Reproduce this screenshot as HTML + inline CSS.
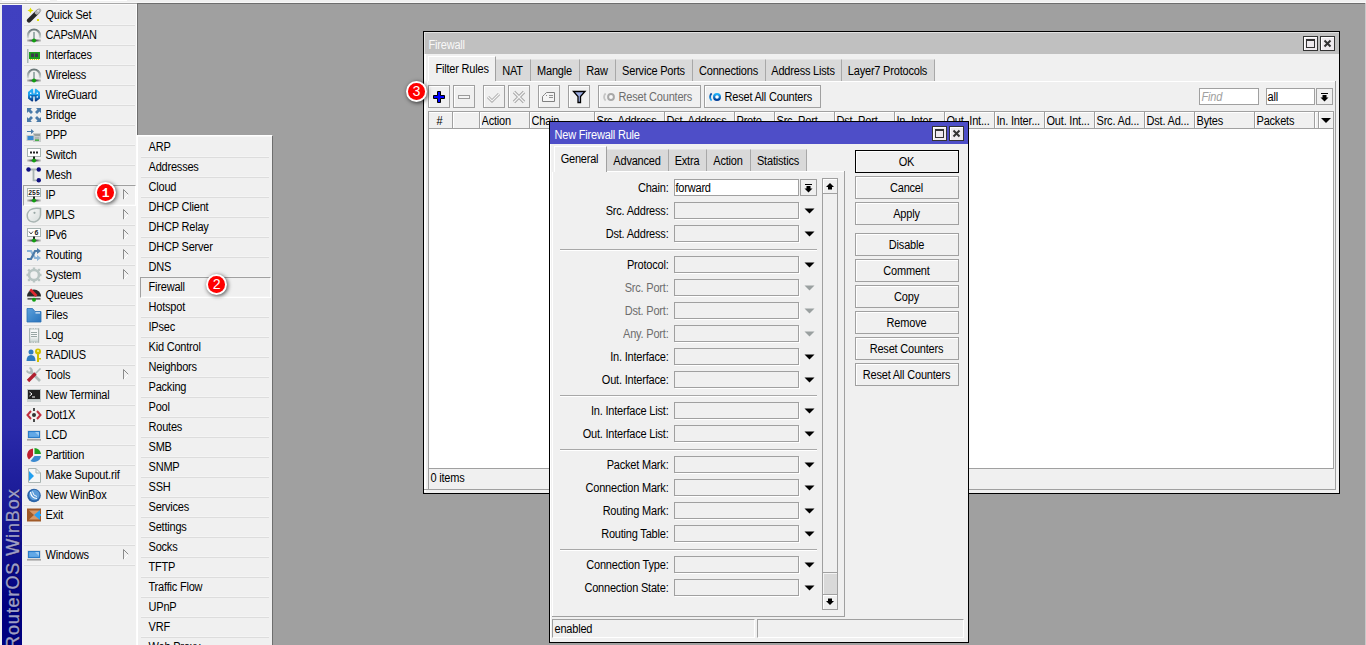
<!DOCTYPE html>
<html><head><meta charset="utf-8"><style>
html,body{margin:0;padding:0;}
body{width:1366px;height:645px;overflow:hidden;position:relative;background:#f0f0f0;font-family:"Liberation Sans",sans-serif;}
body>div{position:absolute;}
.t{position:absolute;font-size:11px;line-height:13px;height:13px;color:#000;white-space:nowrap;letter-spacing:-0.2px;transform:scaleY(1.11);transform-origin:0 10px;}
</style></head><body>
<div style="left:0px;top:0px;width:1366px;height:3px;background:#f0f0f0"></div>
<div style="left:2px;top:0px;width:23px;height:1px;background:#fff"></div>
<div style="left:27px;top:0px;width:23px;height:1px;background:#fff"></div>
<div style="left:57px;top:0px;width:70px;height:1px;background:#fff"></div>
<div style="left:0px;top:2px;width:1366px;height:1px;background:#f8f8f8"></div>
<div style="left:0px;top:3px;width:137px;height:1px;background:#a8a8a8"></div>
<div style="left:137px;top:3px;width:1228px;height:642px;background:#a0a0a0;border-top:1px solid #6e6e6e;border-left:1px solid #6e6e6e;box-sizing:border-box"></div>
<div style="left:1365px;top:3px;width:1px;height:642px;background:#c8c8c8"></div>
<div style="left:0px;top:4px;width:137px;height:641px;background:#f0f0f0"></div>
<div style="left:0px;top:4px;width:136px;height:1px;background:#fafafa"></div>
<div style="left:136px;top:4px;width:1px;height:641px;background:#fdfdfd"></div>
<div style="left:2px;top:5px;width:20px;height:640px;background:linear-gradient(to bottom,#4040c0 0%,#3c3cbc 35%,#2a2aaa 66%,#14148f 82%,#000080 94%,#000080 100%)"></div>
<div style="left:-72px;top:554px;width:170px;height:20px;transform:rotate(-90deg);transform-origin:85px 10px;font:18px/20px 'Liberation Sans',sans-serif;letter-spacing:0.9px;color:#9e9ec6;-webkit-text-stroke:0.35px #9e9ec6;text-shadow:0 1px 1px rgba(0,0,40,0.8);white-space:nowrap;text-align:left">RouterOS WinBox</div>
<div class="t" style="left:45.5px;top:9px;">Quick Set</div>
<svg style="position:absolute;left:26px;top:7px;" width="16" height="16" viewBox="0 0 16 16"><path d="M3 13.5 L12 4.5" stroke="#262626" stroke-width="4.2" stroke-linecap="round"/><path d="M10.8 5.7 L13.2 3.3" stroke="#b4b4b4" stroke-width="4" stroke-linecap="round"/><rect x="11.3" y="3" width="1.6" height="1.6" fill="#e8e8e8"/>
<path d="M4.5 0.5 L5.4 2.6 L7.5 3.5 L5.4 4.4 L4.5 6.5 L3.6 4.4 L1.5 3.5 L3.6 2.6Z" fill="#e0e000"/><rect x="11" y="12" width="2" height="2" fill="#e0e000"/></svg>
<div style="left:24px;top:24px;width:111px;height:1px;background:#f4f4f4"></div>
<div style="left:24px;top:25px;width:111px;height:1px;background:#dcdcdc"></div>
<div class="t" style="left:45.5px;top:29px;">CAPsMAN</div>
<svg style="position:absolute;left:26px;top:27px;" width="16" height="16" viewBox="0 0 16 16"><defs><linearGradient id="ag1" x1="0" y1="0" x2="0" y2="1"><stop offset="0" stop-color="#6a7878"/><stop offset="1" stop-color="#dde2e2"/></linearGradient><linearGradient id="bg1" x1="0" y1="0" x2="1" y2="0"><stop offset="0" stop-color="#222" stop-opacity="0.2"/><stop offset="0.5" stop-color="#111"/><stop offset="1" stop-color="#222" stop-opacity="0.2"/></linearGradient></defs>
<path d="M2 11.5 V8.5 A6 6 0 0 1 14 8.5 V11.5" fill="none" stroke="url(#ag1)" stroke-width="2.2"/>
<rect x="7" y="5" width="2" height="8" fill="#9fb0ae"/>
<rect x="1" y="12.5" width="14" height="2" fill="url(#bg1)"/>
<circle cx="8" cy="13.5" r="2" fill="#10a010"/></svg>
<div style="left:24px;top:44px;width:111px;height:1px;background:#f4f4f4"></div>
<div style="left:24px;top:45px;width:111px;height:1px;background:#dcdcdc"></div>
<div class="t" style="left:45.5px;top:49px;">Interfaces</div>
<svg style="position:absolute;left:26px;top:47px;" width="16" height="16" viewBox="0 0 16 16"><rect x="1" y="2" width="1.5" height="14" fill="#a9b8b6"/><rect x="3" y="5" width="11" height="7" fill="#1e9c1e"/><rect x="5" y="6.5" width="3" height="3.5" fill="#3a3a4a"/><rect x="9" y="6.5" width="3" height="3.5" fill="#3a3a4a"/><path d="M4 12.5 H13" stroke="#d8d800" stroke-width="1" stroke-dasharray="1 1"/></svg>
<div style="left:24px;top:64px;width:111px;height:1px;background:#f4f4f4"></div>
<div style="left:24px;top:65px;width:111px;height:1px;background:#dcdcdc"></div>
<div class="t" style="left:45.5px;top:69px;">Wireless</div>
<svg style="position:absolute;left:26px;top:67px;" width="16" height="16" viewBox="0 0 16 16"><defs><linearGradient id="ag2" x1="0" y1="0" x2="0" y2="1"><stop offset="0" stop-color="#6a7878"/><stop offset="1" stop-color="#dde2e2"/></linearGradient><linearGradient id="bg2" x1="0" y1="0" x2="1" y2="0"><stop offset="0" stop-color="#222" stop-opacity="0.2"/><stop offset="0.5" stop-color="#111"/><stop offset="1" stop-color="#222" stop-opacity="0.2"/></linearGradient></defs>
<path d="M2 11.5 V8.5 A6 6 0 0 1 14 8.5 V11.5" fill="none" stroke="url(#ag2)" stroke-width="2.2"/>
<rect x="7" y="5" width="2" height="8" fill="#9fb0ae"/>
<rect x="1" y="12.5" width="14" height="2" fill="url(#bg2)"/>
<circle cx="8" cy="13.5" r="2" fill="#10a010"/></svg>
<div style="left:24px;top:84px;width:111px;height:1px;background:#f4f4f4"></div>
<div style="left:24px;top:85px;width:111px;height:1px;background:#dcdcdc"></div>
<div class="t" style="left:45.5px;top:89px;">WireGuard</div>
<svg style="position:absolute;left:26px;top:87px;" width="16" height="16" viewBox="0 0 16 16"><defs><linearGradient id="wg" x1="0" y1="0" x2="0" y2="1"><stop offset="0" stop-color="#28b4f8"/><stop offset="0.45" stop-color="#1ea0ec"/><stop offset="1" stop-color="#002878"/></linearGradient></defs><path d="M6.2 1.5 L2 5 V11.5 L6.2 14.8 L7.2 13.8 V11.8 L8 11 V5.2 L7.2 4.4 V2.5Z M9.8 1.5 L14 5 V11.5 L9.8 14.8 L8.8 13.8 V11.8 L8 11 V5.2 L8.8 4.4 V2.5Z" fill="url(#wg)"/><rect x="5" y="6.8" width="6" height="2.4" fill="url(#wg)"/><g fill="#f4f8ff"><rect x="4" y="5.6" width="1.4" height="1.4"/><rect x="10.6" y="5.6" width="1.4" height="1.4"/><rect x="4" y="9.2" width="1.4" height="1.4"/><rect x="10.6" y="9.2" width="1.4" height="1.4"/></g><rect x="7.3" y="4.5" width="1.4" height="2" fill="#f0f0f0"/><rect x="7.3" y="9.5" width="1.4" height="2.2" fill="#f0f0f0"/></svg>
<div style="left:24px;top:104px;width:111px;height:1px;background:#f4f4f4"></div>
<div style="left:24px;top:105px;width:111px;height:1px;background:#dcdcdc"></div>
<div class="t" style="left:45.5px;top:109px;">Bridge</div>
<svg style="position:absolute;left:26px;top:107px;" width="16" height="16" viewBox="0 0 16 16"><path transform="translate(1 1) scale(1 1)" d="M0 0 H5 L3.5 1.5 L6 4 L4 6 L1.5 3.5 L0 5Z" fill="#4a7aa8"/><path transform="translate(15 1) scale(-1 1)" d="M0 0 H5 L3.5 1.5 L6 4 L4 6 L1.5 3.5 L0 5Z" fill="#4a7aa8"/><path transform="translate(1 15) scale(1 -1)" d="M0 0 H5 L3.5 1.5 L6 4 L4 6 L1.5 3.5 L0 5Z" fill="#4a7aa8"/><path transform="translate(15 15) scale(-1 -1)" d="M0 0 H5 L3.5 1.5 L6 4 L4 6 L1.5 3.5 L0 5Z" fill="#4a7aa8"/></svg>
<div style="left:24px;top:124px;width:111px;height:1px;background:#f4f4f4"></div>
<div style="left:24px;top:125px;width:111px;height:1px;background:#dcdcdc"></div>
<div class="t" style="left:45.5px;top:129px;">PPP</div>
<svg style="position:absolute;left:26px;top:127px;" width="16" height="16" viewBox="0 0 16 16"><path d="M1 4 H5 V2 L8 4.5 L5 7 V5 H1Z" fill="#4a7aa8"/><rect x="7" y="6" width="8" height="9" fill="#c8cccc"/><rect x="8" y="7" width="6" height="2" fill="#9aa0a0"/><rect x="9" y="10.5" width="4" height="1" fill="#9aa0a0"/><rect x="9" y="12.5" width="4" height="1.2" fill="#18a018"/><rect x="1" y="8.5" width="7" height="5" fill="#3a8ad0" stroke="#c8cccc" stroke-width="1"/></svg>
<div style="left:24px;top:144px;width:111px;height:1px;background:#f4f4f4"></div>
<div style="left:24px;top:145px;width:111px;height:1px;background:#dcdcdc"></div>
<div class="t" style="left:45.5px;top:149px;">Switch</div>
<svg style="position:absolute;left:26px;top:147px;" width="16" height="16" viewBox="0 0 16 16"><defs><linearGradient id="sb0" x1="0" y1="0" x2="1" y2="0"><stop offset="0" stop-color="#222" stop-opacity="0.15"/><stop offset="0.5" stop-color="#111"/><stop offset="1" stop-color="#222" stop-opacity="0.15"/></linearGradient></defs><rect x="1.5" y="1.5" width="13" height="8" fill="#fff" stroke="#a8b4b2" stroke-width="1"/><rect x="4" y="4.5" width="2" height="2" fill="#222"/><rect x="7" y="4.5" width="2" height="2" fill="#222"/><rect x="10" y="4.5" width="2" height="2" fill="#222"/>
<rect x="7" y="9.5" width="2" height="3" fill="#222"/><rect x="1" y="12.5" width="14" height="2" fill="url(#sb0)"/><circle cx="8" cy="13.5" r="2" fill="#10a010"/></svg>
<div style="left:24px;top:164px;width:111px;height:1px;background:#f4f4f4"></div>
<div style="left:24px;top:165px;width:111px;height:1px;background:#dcdcdc"></div>
<div class="t" style="left:45.5px;top:169px;">Mesh</div>
<svg style="position:absolute;left:26px;top:167px;" width="16" height="16" viewBox="0 0 16 16"><path d="M2.5 2.5 H12.8 M7.5 2.5 V13.3 H12.8" fill="none" stroke="#a8b4b2" stroke-width="1.8"/><circle cx="2.5" cy="2.5" r="2.2" fill="#101080"/><circle cx="12.8" cy="2.5" r="2.2" fill="#101080"/><circle cx="12.8" cy="13.3" r="2.2" fill="#101080"/></svg>
<div style="left:24px;top:184px;width:111px;height:1px;background:#f4f4f4"></div>
<div style="left:24px;top:185px;width:111px;height:1px;background:#dcdcdc"></div>
<div class="t" style="left:45.5px;top:189px;">IP</div>
<svg style="position:absolute;left:26px;top:187px;" width="16" height="16" viewBox="0 0 16 16"><defs><linearGradient id="sb1" x1="0" y1="0" x2="1" y2="0"><stop offset="0" stop-color="#222" stop-opacity="0.15"/><stop offset="0.5" stop-color="#111"/><stop offset="1" stop-color="#222" stop-opacity="0.15"/></linearGradient></defs><rect x="1.5" y="1.5" width="13" height="8" fill="#fff" stroke="#a8b4b2" stroke-width="1"/><text x="8" y="8" font-family="Liberation Mono" font-size="6.5" font-weight="bold" text-anchor="middle" fill="#222">255</text>
<rect x="7" y="9.5" width="2" height="3" fill="#222"/><rect x="1" y="12.5" width="14" height="2" fill="url(#sb1)"/><circle cx="8" cy="13.5" r="2" fill="#10a010"/></svg>
<div style="left:24px;top:204px;width:111px;height:1px;background:#f4f4f4"></div>
<div style="left:24px;top:205px;width:111px;height:1px;background:#dcdcdc"></div>
<svg style="position:absolute;left:122px;top:189px;" width="8" height="12" viewBox="0 0 8 12"><path d="M1.5 0.5 L1.5 10.5" stroke="#8a8a8a" stroke-width="1"/><path d="M1.5 0.5 L6.5 5.5" stroke="#8a8a8a" stroke-width="1"/><path d="M1.5 10.5 L6.5 5.5" stroke="#ffffff" stroke-width="1"/></svg>
<div class="t" style="left:45.5px;top:209px;">MPLS</div>
<svg style="position:absolute;left:26px;top:207px;" width="16" height="16" viewBox="0 0 16 16"><defs><linearGradient id="mg" x1="0" y1="0" x2="1" y2="1"><stop offset="0" stop-color="#f8f8f8"/><stop offset="1" stop-color="#d8dedd"/></linearGradient></defs><path d="M4 3 Q7 1 11 1.2 L14.5 1.5 L14.5 8 Q14 13 9 14.8 Q4 15.5 2 12 Q0.8 9 1.5 6.5 Q2.3 4.2 4 3Z" fill="url(#mg)" stroke="#a8b4b2" stroke-width="1.5"/><circle cx="8.5" cy="5.8" r="1.1" fill="#9aa8a6"/></svg>
<div style="left:24px;top:224px;width:111px;height:1px;background:#f4f4f4"></div>
<div style="left:24px;top:225px;width:111px;height:1px;background:#dcdcdc"></div>
<svg style="position:absolute;left:122px;top:209px;" width="8" height="12" viewBox="0 0 8 12"><path d="M1.5 0.5 L1.5 10.5" stroke="#8a8a8a" stroke-width="1"/><path d="M1.5 0.5 L6.5 5.5" stroke="#8a8a8a" stroke-width="1"/><path d="M1.5 10.5 L6.5 5.5" stroke="#ffffff" stroke-width="1"/></svg>
<div class="t" style="left:45.5px;top:229px;">IPv6</div>
<svg style="position:absolute;left:26px;top:227px;" width="16" height="16" viewBox="0 0 16 16"><defs><linearGradient id="sb2" x1="0" y1="0" x2="1" y2="0"><stop offset="0" stop-color="#222" stop-opacity="0.15"/><stop offset="0.5" stop-color="#111"/><stop offset="1" stop-color="#222" stop-opacity="0.15"/></linearGradient></defs><rect x="1.5" y="1.5" width="13" height="8" fill="#fff" stroke="#a8b4b2" stroke-width="1"/><path d="M3 4.5 L5 7 L7 4.5" fill="none" stroke="#222" stroke-width="0.8"/><text x="10.5" y="8" font-family="Liberation Sans" font-size="7" font-weight="bold" text-anchor="middle" fill="#222">6</text>
<rect x="7" y="9.5" width="2" height="3" fill="#222"/><rect x="1" y="12.5" width="14" height="2" fill="url(#sb2)"/><circle cx="8" cy="13.5" r="2" fill="#10a010"/></svg>
<div style="left:24px;top:244px;width:111px;height:1px;background:#f4f4f4"></div>
<div style="left:24px;top:245px;width:111px;height:1px;background:#dcdcdc"></div>
<svg style="position:absolute;left:122px;top:229px;" width="8" height="12" viewBox="0 0 8 12"><path d="M1.5 0.5 L1.5 10.5" stroke="#8a8a8a" stroke-width="1"/><path d="M1.5 0.5 L6.5 5.5" stroke="#8a8a8a" stroke-width="1"/><path d="M1.5 10.5 L6.5 5.5" stroke="#ffffff" stroke-width="1"/></svg>
<div class="t" style="left:45.5px;top:249px;">Routing</div>
<svg style="position:absolute;left:26px;top:247px;" width="16" height="16" viewBox="0 0 16 16"><path d="M1 4 H5 L9 11 H12" fill="none" stroke="#8ab4d8" stroke-width="2.2"/><path d="M1 12 H5 L9 4 H12" fill="none" stroke="#4a7aa8" stroke-width="2.2"/><path d="M11 1 L15 4 L11 7Z" fill="#4a7aa8"/><path d="M11 8 L15 11 L11 14Z" fill="#8ab4d8"/></svg>
<div style="left:24px;top:264px;width:111px;height:1px;background:#f4f4f4"></div>
<div style="left:24px;top:265px;width:111px;height:1px;background:#dcdcdc"></div>
<svg style="position:absolute;left:122px;top:249px;" width="8" height="12" viewBox="0 0 8 12"><path d="M1.5 0.5 L1.5 10.5" stroke="#8a8a8a" stroke-width="1"/><path d="M1.5 0.5 L6.5 5.5" stroke="#8a8a8a" stroke-width="1"/><path d="M1.5 10.5 L6.5 5.5" stroke="#ffffff" stroke-width="1"/></svg>
<div class="t" style="left:45.5px;top:269px;">System</div>
<svg style="position:absolute;left:26px;top:267px;" width="16" height="16" viewBox="0 0 16 16"><circle cx="8" cy="8" r="5" fill="none" stroke="#b8c4c2" stroke-width="2.6"/><g fill="#b8c4c2"><rect x="6.8" y="0.5" width="2.4" height="3"/><rect x="6.8" y="12.5" width="2.4" height="3"/><rect x="0.5" y="6.8" width="3" height="2.4"/><rect x="12.5" y="6.8" width="3" height="2.4"/><rect x="1.8" y="2.2" width="2.4" height="2.4" transform="rotate(45 3 3.4)"/><rect x="11.8" y="11.8" width="2.4" height="2.4"/><rect x="11.8" y="1.8" width="2.4" height="2.4"/><rect x="1.8" y="11.8" width="2.4" height="2.4"/></g></svg>
<div style="left:24px;top:284px;width:111px;height:1px;background:#f4f4f4"></div>
<div style="left:24px;top:285px;width:111px;height:1px;background:#dcdcdc"></div>
<svg style="position:absolute;left:122px;top:269px;" width="8" height="12" viewBox="0 0 8 12"><path d="M1.5 0.5 L1.5 10.5" stroke="#8a8a8a" stroke-width="1"/><path d="M1.5 0.5 L6.5 5.5" stroke="#8a8a8a" stroke-width="1"/><path d="M1.5 10.5 L6.5 5.5" stroke="#ffffff" stroke-width="1"/></svg>
<div class="t" style="left:45.5px;top:289px;">Queues</div>
<svg style="position:absolute;left:26px;top:287px;" width="16" height="16" viewBox="0 0 16 16"><path d="M1 9.5 A7 7 0 0 1 15 9.5 Z" fill="#2a2a2a"/><path d="M4.2 2.5 L10.5 9" stroke="#e02830" stroke-width="2.6"/><path d="M1.5 11.8 H14.5" stroke="#222" stroke-width="1.8" opacity="0.7"/><circle cx="8" cy="12.8" r="2" fill="#10a010"/></svg>
<div style="left:24px;top:304px;width:111px;height:1px;background:#f4f4f4"></div>
<div style="left:24px;top:305px;width:111px;height:1px;background:#dcdcdc"></div>
<div class="t" style="left:45.5px;top:309px;">Files</div>
<svg style="position:absolute;left:26px;top:307px;" width="16" height="16" viewBox="0 0 16 16"><defs><linearGradient id="fg" x1="0" y1="0" x2="1" y2="1"><stop offset="0" stop-color="#5aa0dc"/><stop offset="1" stop-color="#2a74bc"/></linearGradient></defs><path d="M1 1.5 H6.5 L9 4.5 H15 V15 H1Z" fill="url(#fg)" stroke="#2a6fb4" stroke-width="0.8"/><rect x="9.5" y="5.3" width="4.5" height="1.2" fill="#e8f0f8"/></svg>
<div style="left:24px;top:324px;width:111px;height:1px;background:#f4f4f4"></div>
<div style="left:24px;top:325px;width:111px;height:1px;background:#dcdcdc"></div>
<div class="t" style="left:45.5px;top:329px;">Log</div>
<svg style="position:absolute;left:26px;top:327px;" width="16" height="16" viewBox="0 0 16 16"><defs><linearGradient id="lg" x1="0" y1="0" x2="0" y2="1"><stop offset="0.55" stop-color="#f6f8f8"/><stop offset="1" stop-color="#c4d0ce"/></linearGradient></defs><rect x="3.6" y="1.8" width="9" height="13.4" fill="url(#lg)" stroke="#a8b4b2" stroke-width="1.2"/><path d="M6 1.2 V2.2 M8.5 1.2 V2.2 M11 1.2 V2.2 M6 14.8 V15.8 M8.5 14.8 V15.8 M11 14.8 V15.8" stroke="#f0f0f0" stroke-width="1"/><path d="M5 5.5 H11 M5 7.5 H11 M5 9.5 H11" stroke="#98a6a4" stroke-width="1"/></svg>
<div style="left:24px;top:344px;width:111px;height:1px;background:#f4f4f4"></div>
<div style="left:24px;top:345px;width:111px;height:1px;background:#dcdcdc"></div>
<div class="t" style="left:45.5px;top:349px;">RADIUS</div>
<svg style="position:absolute;left:26px;top:347px;" width="16" height="16" viewBox="0 0 16 16"><circle cx="5" cy="5" r="2.5" fill="#2f7cc0"/><path d="M0.5 14 Q0.5 8 5 8 Q9.5 8 9.5 14Z" fill="#2f7cc0"/><circle cx="12" cy="4.5" r="3" fill="#d0c000"/><rect x="11" y="6" width="2" height="9" fill="#d0c000"/><rect x="13" y="11" width="2" height="1.5" fill="#d0c000"/><circle cx="12" cy="4" r="1" fill="#f4f4a0"/></svg>
<div style="left:24px;top:364px;width:111px;height:1px;background:#f4f4f4"></div>
<div style="left:24px;top:365px;width:111px;height:1px;background:#dcdcdc"></div>
<div class="t" style="left:45.5px;top:369px;">Tools</div>
<svg style="position:absolute;left:26px;top:367px;" width="16" height="16" viewBox="0 0 16 16"><path d="M4 4 L14 14" stroke="#b0bcba" stroke-width="2.6"/><path d="M1 3.5 A3 3 0 0 0 5.5 5.5 M3.5 1 A3 3 0 0 1 5.5 5.5" fill="none" stroke="#b0bcba" stroke-width="2"/><path d="M14.5 1.5 L9 7" stroke="#b0bcba" stroke-width="1.6"/><path d="M9.5 6.5 L2 14" stroke="#b02030" stroke-width="3.4"/></svg>
<div style="left:24px;top:384px;width:111px;height:1px;background:#f4f4f4"></div>
<div style="left:24px;top:385px;width:111px;height:1px;background:#dcdcdc"></div>
<svg style="position:absolute;left:122px;top:369px;" width="8" height="12" viewBox="0 0 8 12"><path d="M1.5 0.5 L1.5 10.5" stroke="#8a8a8a" stroke-width="1"/><path d="M1.5 0.5 L6.5 5.5" stroke="#8a8a8a" stroke-width="1"/><path d="M1.5 10.5 L6.5 5.5" stroke="#ffffff" stroke-width="1"/></svg>
<div class="t" style="left:45.5px;top:389px;">New Terminal</div>
<svg style="position:absolute;left:26px;top:387px;" width="16" height="16" viewBox="0 0 16 16"><rect x="1.5" y="2.5" width="13" height="10" fill="#222" stroke="#c0c8c8" stroke-width="1"/><path d="M3.5 5 L6 7 L3.5 9" fill="none" stroke="#fff" stroke-width="1"/><path d="M6 10 H9" stroke="#fff" stroke-width="1"/><path d="M1 14 H15" stroke="#c0c8c8" stroke-width="1.5"/></svg>
<div style="left:24px;top:404px;width:111px;height:1px;background:#f4f4f4"></div>
<div style="left:24px;top:405px;width:111px;height:1px;background:#dcdcdc"></div>
<div class="t" style="left:45.5px;top:409px;">Dot1X</div>
<svg style="position:absolute;left:26px;top:407px;" width="16" height="16" viewBox="0 0 16 16"><path d="M5 4 L1.5 8 L5 12 M11 4 L14.5 8 L11 12" fill="none" stroke="#c03040" stroke-width="2"/><circle cx="8" cy="8" r="2" fill="#333"/><rect x="7.2" y="1" width="1.6" height="3" fill="#222"/><rect x="7.2" y="12" width="1.6" height="3" fill="#222"/></svg>
<div style="left:24px;top:424px;width:111px;height:1px;background:#f4f4f4"></div>
<div style="left:24px;top:425px;width:111px;height:1px;background:#dcdcdc"></div>
<div class="t" style="left:45.5px;top:429px;">LCD</div>
<svg style="position:absolute;left:26px;top:427px;" width="16" height="16" viewBox="0 0 16 16"><rect x="1" y="3" width="14" height="9" fill="#ece6e0"/><rect x="2.5" y="4.5" width="11" height="6" fill="#62a8e6" stroke="#2a7cc8" stroke-width="1.2"/><path d="M9 5 H13 V9Z" fill="#b0d4f4" opacity="0.8"/><rect x="1" y="12" width="14" height="1.6" fill="#a4a4a4"/></svg>
<div style="left:24px;top:444px;width:111px;height:1px;background:#f4f4f4"></div>
<div style="left:24px;top:445px;width:111px;height:1px;background:#dcdcdc"></div>
<div class="t" style="left:45.5px;top:449px;">Partition</div>
<svg style="position:absolute;left:26px;top:447px;" width="16" height="16" viewBox="0 0 16 16"><path d="M7 1.5 A6.5 6.5 0 0 0 3 12.5 L7 8.5Z" fill="#c02030"/><path d="M8.5 1 A6.5 6.5 0 0 1 15 7 H8.5Z" fill="#20a020"/><path d="M15 9 A7 7 0 0 1 4.5 14 L8.5 9Z" fill="#3a8ad0"/></svg>
<div style="left:24px;top:464px;width:111px;height:1px;background:#f4f4f4"></div>
<div style="left:24px;top:465px;width:111px;height:1px;background:#dcdcdc"></div>
<div class="t" style="left:45.5px;top:469px;">Make Supout.rif</div>
<svg style="position:absolute;left:26px;top:467px;" width="16" height="16" viewBox="0 0 16 16"><path d="M2.5 1.5 H10 L14.5 6 V15.5 H2.5Z" fill="#f4f6f6" stroke="#a8b4b2" stroke-width="1"/><path d="M10 1.5 V6 H14.5" fill="none" stroke="#a8b4b2" stroke-width="1"/><path d="M3 4 L8 9 L3 14Z" fill="#20a0f0"/></svg>
<div style="left:24px;top:484px;width:111px;height:1px;background:#f4f4f4"></div>
<div style="left:24px;top:485px;width:111px;height:1px;background:#dcdcdc"></div>
<div class="t" style="left:45.5px;top:489px;">New WinBox</div>
<svg style="position:absolute;left:26px;top:487px;" width="16" height="16" viewBox="0 0 16 16"><circle cx="8" cy="8.5" r="6.8" fill="#2a64a8"/><circle cx="8.3" cy="8" r="5.3" fill="#5a9ad8"/><path d="M4.5 5 Q5 11 11 11.5" fill="none" stroke="#fff" stroke-width="1.2"/><path d="M6.5 4.5 Q7 9 11 9.5" fill="none" stroke="#fff" stroke-width="0.9"/></svg>
<div style="left:24px;top:504px;width:111px;height:1px;background:#f4f4f4"></div>
<div style="left:24px;top:505px;width:111px;height:1px;background:#dcdcdc"></div>
<div class="t" style="left:45.5px;top:509px;">Exit</div>
<svg style="position:absolute;left:26px;top:507px;" width="16" height="16" viewBox="0 0 16 16"><rect x="1" y="1.5" width="14" height="13" fill="#a05a28"/><rect x="3" y="3.5" width="10" height="9" fill="#d89868"/><path d="M3 3.5 L8 8 L3 12.5Z" fill="#a05a28"/><path d="M14 3 L8 8 L14 13Z" fill="#2aa0f0"/><rect x="13" y="7" width="2" height="2" fill="#2aa0f0"/></svg>
<div style="left:24px;top:524px;width:111px;height:1px;background:#f4f4f4"></div>
<div style="left:24px;top:525px;width:111px;height:1px;background:#dcdcdc"></div>
<div style="left:24px;top:544px;width:111px;height:1px;background:#f4f4f4"></div>
<div style="left:24px;top:545px;width:111px;height:1px;background:#dcdcdc"></div>
<div class="t" style="left:45.5px;top:549px;">Windows</div>
<svg style="position:absolute;left:26px;top:547px;" width="16" height="16" viewBox="0 0 16 16"><rect x="1" y="3" width="14" height="9" fill="#ece6e0"/><rect x="2.5" y="4.5" width="11" height="6" fill="#62a8e6" stroke="#2a7cc8" stroke-width="1.2"/><path d="M9 5 H13 V9Z" fill="#b0d4f4" opacity="0.8"/><rect x="1" y="12" width="14" height="1.6" fill="#a4a4a4"/></svg>
<div style="left:24px;top:564px;width:111px;height:1px;background:#f4f4f4"></div>
<div style="left:24px;top:565px;width:111px;height:1px;background:#dcdcdc"></div>
<svg style="position:absolute;left:122px;top:549px;" width="8" height="12" viewBox="0 0 8 12"><path d="M1.5 0.5 L1.5 10.5" stroke="#8a8a8a" stroke-width="1"/><path d="M1.5 0.5 L6.5 5.5" stroke="#8a8a8a" stroke-width="1"/><path d="M1.5 10.5 L6.5 5.5" stroke="#ffffff" stroke-width="1"/></svg>
<div style="left:23px;top:185px;width:113px;height:21px;border-top:1px solid #a0a0a0;border-left:1px solid #a0a0a0;border-bottom:1px solid #fff;border-right:1px solid #fff;box-sizing:border-box"></div>
<div style="left:137px;top:135px;width:136px;height:510px;background:#f0f0f0;border-top:1px solid #fff;border-left:1px solid #fff;border-right:1px solid #6e6e6e;box-sizing:border-box"></div>
<div style="left:138px;top:136px;width:134px;height:1px;background:#f8f8f8"></div>
<div class="t" style="left:148.5px;top:141px;">ARP</div>
<div style="left:141px;top:156px;width:128px;height:1px;background:#f4f4f4"></div>
<div style="left:141px;top:157px;width:128px;height:1px;background:#dcdcdc"></div>
<div class="t" style="left:148.5px;top:161px;">Addresses</div>
<div style="left:141px;top:176px;width:128px;height:1px;background:#f4f4f4"></div>
<div style="left:141px;top:177px;width:128px;height:1px;background:#dcdcdc"></div>
<div class="t" style="left:148.5px;top:181px;">Cloud</div>
<div style="left:141px;top:196px;width:128px;height:1px;background:#f4f4f4"></div>
<div style="left:141px;top:197px;width:128px;height:1px;background:#dcdcdc"></div>
<div class="t" style="left:148.5px;top:201px;">DHCP Client</div>
<div style="left:141px;top:216px;width:128px;height:1px;background:#f4f4f4"></div>
<div style="left:141px;top:217px;width:128px;height:1px;background:#dcdcdc"></div>
<div class="t" style="left:148.5px;top:221px;">DHCP Relay</div>
<div style="left:141px;top:236px;width:128px;height:1px;background:#f4f4f4"></div>
<div style="left:141px;top:237px;width:128px;height:1px;background:#dcdcdc"></div>
<div class="t" style="left:148.5px;top:241px;">DHCP Server</div>
<div style="left:141px;top:256px;width:128px;height:1px;background:#f4f4f4"></div>
<div style="left:141px;top:257px;width:128px;height:1px;background:#dcdcdc"></div>
<div class="t" style="left:148.5px;top:261px;">DNS</div>
<div style="left:141px;top:276px;width:128px;height:1px;background:#f4f4f4"></div>
<div style="left:141px;top:277px;width:128px;height:1px;background:#dcdcdc"></div>
<div class="t" style="left:148.5px;top:281px;">Firewall</div>
<div style="left:141px;top:296px;width:128px;height:1px;background:#f4f4f4"></div>
<div style="left:141px;top:297px;width:128px;height:1px;background:#dcdcdc"></div>
<div class="t" style="left:148.5px;top:301px;">Hotspot</div>
<div style="left:141px;top:316px;width:128px;height:1px;background:#f4f4f4"></div>
<div style="left:141px;top:317px;width:128px;height:1px;background:#dcdcdc"></div>
<div class="t" style="left:148.5px;top:321px;">IPsec</div>
<div style="left:141px;top:336px;width:128px;height:1px;background:#f4f4f4"></div>
<div style="left:141px;top:337px;width:128px;height:1px;background:#dcdcdc"></div>
<div class="t" style="left:148.5px;top:341px;">Kid Control</div>
<div style="left:141px;top:356px;width:128px;height:1px;background:#f4f4f4"></div>
<div style="left:141px;top:357px;width:128px;height:1px;background:#dcdcdc"></div>
<div class="t" style="left:148.5px;top:361px;">Neighbors</div>
<div style="left:141px;top:376px;width:128px;height:1px;background:#f4f4f4"></div>
<div style="left:141px;top:377px;width:128px;height:1px;background:#dcdcdc"></div>
<div class="t" style="left:148.5px;top:381px;">Packing</div>
<div style="left:141px;top:396px;width:128px;height:1px;background:#f4f4f4"></div>
<div style="left:141px;top:397px;width:128px;height:1px;background:#dcdcdc"></div>
<div class="t" style="left:148.5px;top:401px;">Pool</div>
<div style="left:141px;top:416px;width:128px;height:1px;background:#f4f4f4"></div>
<div style="left:141px;top:417px;width:128px;height:1px;background:#dcdcdc"></div>
<div class="t" style="left:148.5px;top:421px;">Routes</div>
<div style="left:141px;top:436px;width:128px;height:1px;background:#f4f4f4"></div>
<div style="left:141px;top:437px;width:128px;height:1px;background:#dcdcdc"></div>
<div class="t" style="left:148.5px;top:441px;">SMB</div>
<div style="left:141px;top:456px;width:128px;height:1px;background:#f4f4f4"></div>
<div style="left:141px;top:457px;width:128px;height:1px;background:#dcdcdc"></div>
<div class="t" style="left:148.5px;top:461px;">SNMP</div>
<div style="left:141px;top:476px;width:128px;height:1px;background:#f4f4f4"></div>
<div style="left:141px;top:477px;width:128px;height:1px;background:#dcdcdc"></div>
<div class="t" style="left:148.5px;top:481px;">SSH</div>
<div style="left:141px;top:496px;width:128px;height:1px;background:#f4f4f4"></div>
<div style="left:141px;top:497px;width:128px;height:1px;background:#dcdcdc"></div>
<div class="t" style="left:148.5px;top:501px;">Services</div>
<div style="left:141px;top:516px;width:128px;height:1px;background:#f4f4f4"></div>
<div style="left:141px;top:517px;width:128px;height:1px;background:#dcdcdc"></div>
<div class="t" style="left:148.5px;top:521px;">Settings</div>
<div style="left:141px;top:536px;width:128px;height:1px;background:#f4f4f4"></div>
<div style="left:141px;top:537px;width:128px;height:1px;background:#dcdcdc"></div>
<div class="t" style="left:148.5px;top:541px;">Socks</div>
<div style="left:141px;top:556px;width:128px;height:1px;background:#f4f4f4"></div>
<div style="left:141px;top:557px;width:128px;height:1px;background:#dcdcdc"></div>
<div class="t" style="left:148.5px;top:561px;">TFTP</div>
<div style="left:141px;top:576px;width:128px;height:1px;background:#f4f4f4"></div>
<div style="left:141px;top:577px;width:128px;height:1px;background:#dcdcdc"></div>
<div class="t" style="left:148.5px;top:581px;">Traffic Flow</div>
<div style="left:141px;top:596px;width:128px;height:1px;background:#f4f4f4"></div>
<div style="left:141px;top:597px;width:128px;height:1px;background:#dcdcdc"></div>
<div class="t" style="left:148.5px;top:601px;">UPnP</div>
<div style="left:141px;top:616px;width:128px;height:1px;background:#f4f4f4"></div>
<div style="left:141px;top:617px;width:128px;height:1px;background:#dcdcdc"></div>
<div class="t" style="left:148.5px;top:621px;">VRF</div>
<div style="left:141px;top:636px;width:128px;height:1px;background:#f4f4f4"></div>
<div style="left:141px;top:637px;width:128px;height:1px;background:#dcdcdc"></div>
<div class="t" style="left:148.5px;top:641px;">Web Proxy</div>
<div style="left:141px;top:656px;width:128px;height:1px;background:#f4f4f4"></div>
<div style="left:141px;top:657px;width:128px;height:1px;background:#dcdcdc"></div>
<div style="left:140px;top:277px;width:131px;height:21px;border-top:1px solid #a0a0a0;border-left:1px solid #a0a0a0;border-bottom:1px solid #fff;border-right:1px solid #fff;box-sizing:border-box"></div>
<div style="left:423px;top:31px;width:917px;height:463px;background:#f0f0f0;border:1px solid #000;box-sizing:border-box"></div>
<div style="left:424px;top:32px;width:915px;height:1px;background:#e0e0e0"></div>
<div style="left:424px;top:32px;width:1px;height:461px;background:#e0e0e0"></div>
<div style="left:425px;top:33px;width:914px;height:21px;background:#c0c0c0"></div>
<div class="t" style="left:428.5px;top:39px;color:#f8f8f8">Firewall</div>
<div style="left:424px;top:54px;width:2px;height:438px;background:#fff"></div>
<div style="left:1303px;top:36px;width:15px;height:15px;background:#eeeaee;border:1px solid #333;box-sizing:border-box;box-shadow:inset 1px 1px 0 #fff"></div>
<div style="left:1306px;top:39px;width:9px;height:9px;border:1px solid #333;border-top-width:2px;box-sizing:border-box"></div>
<div style="left:1320px;top:36px;width:15px;height:15px;background:#eeeaee;border:1px solid #333;box-sizing:border-box;box-shadow:inset 1px 1px 0 #fff"></div>
<svg style="position:absolute;left:1323px;top:39px;" width="9" height="9" viewBox="0 0 9 9"><path d="M1.5 1.5 L7.5 7.5 M7.5 1.5 L1.5 7.5" stroke="#333" stroke-width="2"/></svg>
<div style="left:428px;top:56px;width:68px;height:25px;background:#f0f0f0;border-top:1px solid #fff;border-left:1px solid #fff;border-right:1px solid #a0a0a0;box-sizing:border-box"></div>
<div class="t" style="left:435.5px;top:63px;">Filter Rules</div>
<div style="left:496px;top:59px;width:35px;height:22px;background:#d9d9d9;border-top:1px solid #e4e4e4;border-right:1px solid #a8a8a8;box-sizing:border-box"></div>
<div class="t" style="left:495.5px;top:65px;width:34px;text-align:center;">NAT</div>
<div style="left:531px;top:59px;width:49px;height:22px;background:#d9d9d9;border-top:1px solid #e4e4e4;border-right:1px solid #a8a8a8;box-sizing:border-box"></div>
<div class="t" style="left:530.5px;top:65px;width:48px;text-align:center;">Mangle</div>
<div style="left:580px;top:59px;width:36px;height:22px;background:#d9d9d9;border-top:1px solid #e4e4e4;border-right:1px solid #a8a8a8;box-sizing:border-box"></div>
<div class="t" style="left:579.5px;top:65px;width:35px;text-align:center;">Raw</div>
<div style="left:616px;top:59px;width:77px;height:22px;background:#d9d9d9;border-top:1px solid #e4e4e4;border-right:1px solid #a8a8a8;box-sizing:border-box"></div>
<div class="t" style="left:615.5px;top:65px;width:76px;text-align:center;">Service Ports</div>
<div style="left:693px;top:59px;width:73px;height:22px;background:#d9d9d9;border-top:1px solid #e4e4e4;border-right:1px solid #a8a8a8;box-sizing:border-box"></div>
<div class="t" style="left:692.5px;top:65px;width:72px;text-align:center;">Connections</div>
<div style="left:766px;top:59px;width:76px;height:22px;background:#d9d9d9;border-top:1px solid #e4e4e4;border-right:1px solid #a8a8a8;box-sizing:border-box"></div>
<div class="t" style="left:765.5px;top:65px;width:75px;text-align:center;">Address Lists</div>
<div style="left:842px;top:59px;width:93px;height:22px;background:#d9d9d9;border-top:1px solid #e4e4e4;border-right:1px solid #a8a8a8;box-sizing:border-box"></div>
<div class="t" style="left:841.5px;top:65px;width:92px;text-align:center;">Layer7 Protocols</div>
<div style="left:496px;top:81px;width:840px;height:1px;background:#fff"></div>
<div style="left:427px;top:81px;width:1px;height:4px;background:#fff"></div>
<div style="left:1335px;top:81px;width:1px;height:409px;background:#a0a0a0"></div>
<div style="left:424px;top:489px;width:912px;height:1px;background:#a0a0a0"></div>
<div style="left:428px;top:85px;width:22px;height:23px;background:#f0f0f0;border:1px solid #a0a0a0;box-sizing:border-box;box-shadow:inset 1px 1px 0 #fff"></div>
<div style="left:453px;top:85px;width:22px;height:23px;background:#f0f0f0;border:1px solid #a0a0a0;box-sizing:border-box;box-shadow:inset 1px 1px 0 #fff"></div>
<div style="left:483px;top:85px;width:22px;height:23px;background:#f0f0f0;border:1px solid #a0a0a0;box-sizing:border-box;box-shadow:inset 1px 1px 0 #fff"></div>
<div style="left:508px;top:85px;width:22px;height:23px;background:#f0f0f0;border:1px solid #a0a0a0;box-sizing:border-box;box-shadow:inset 1px 1px 0 #fff"></div>
<div style="left:538px;top:85px;width:22px;height:23px;background:#f0f0f0;border:1px solid #a0a0a0;box-sizing:border-box;box-shadow:inset 1px 1px 0 #fff"></div>
<div style="left:568px;top:85px;width:22px;height:23px;background:#f0f0f0;border:1px solid #a0a0a0;box-sizing:border-box;box-shadow:inset 1px 1px 0 #fff"></div>
<svg style="position:absolute;left:432px;top:90px;" width="14" height="14" viewBox="0 0 14 14"><path d="M5.5 1.5 H8.5 V5.5 H12.5 V8.5 H8.5 V12.5 H5.5 V8.5 H1.5 V5.5 H5.5 Z" fill="#0000ff" stroke="#000" stroke-width="1"/></svg>
<svg style="position:absolute;left:457px;top:94px;" width="14" height="6" viewBox="0 0 14 6"><rect x="1.5" y="1.5" width="11" height="3" fill="#f4f4f4" stroke="#9a9a9a" stroke-width="1"/></svg>
<svg style="position:absolute;left:486px;top:90px;" width="16" height="14" viewBox="0 0 16 14"><path d="M2 7 L6 11 L13 4" fill="none" stroke="#a8a8a8" stroke-width="3"/><path d="M2 7 L6 11 L13 4" fill="none" stroke="#f4f4f4" stroke-width="1.2"/></svg>
<svg style="position:absolute;left:512px;top:90px;" width="14" height="14" viewBox="0 0 14 14"><path d="M2 2 L12 12 M12 2 L2 12" fill="none" stroke="#a8a8a8" stroke-width="3.2"/><path d="M2 2 L12 12 M12 2 L2 12" fill="none" stroke="#f4f4f4" stroke-width="1.3"/></svg>
<svg style="position:absolute;left:541px;top:91px;" width="16" height="12" viewBox="0 0 16 12"><path d="M3.5 3.5 L5.5 1.5 H13.5 V10.5 H1.5 V5.5 Z" fill="#f4f4f4" stroke="#808080" stroke-width="1"/><path d="M5 4.5 H6 M8 4.5 H12 M8 6.5 H12" stroke="#909090" stroke-width="1"/></svg>
<svg style="position:absolute;left:572px;top:90px;" width="15" height="14" viewBox="0 0 15 14"><path d="M1.5 1.5 H13 L8.5 6.5 V12.5 H6 V6.5 Z" fill="#9aaadf" stroke="#000" stroke-width="1.3"/></svg>
<div style="left:598px;top:85px;width:103px;height:23px;background:#f0f0f0;border:1px solid #a0a0a0;box-sizing:border-box;box-shadow:inset 1px 1px 0 #fff"></div>
<svg style="position:absolute;left:603px;top:90px;" width="14" height="14" viewBox="0 0 14 14"><path d="M2.6 3.3 A5.2 5.2 0 0 0 2.6 10.7" fill="none" stroke="#c4c4c4" stroke-width="1.8"/><circle cx="8" cy="7" r="2.9" fill="#f8f8f8" stroke="#a8a8a8" stroke-width="2"/></svg>
<div class="t" style="left:618.5px;top:91px;color:#6d6d6d">Reset Counters</div>
<div style="left:704px;top:85px;width:117px;height:23px;background:#f0f0f0;border:1px solid #a0a0a0;box-sizing:border-box;box-shadow:inset 1px 1px 0 #fff"></div>
<svg style="position:absolute;left:709px;top:90px;" width="14" height="14" viewBox="0 0 14 14"><defs><linearGradient id="rg" x1="0" y1="0" x2="0" y2="1"><stop offset="0" stop-color="#20b0f8"/><stop offset="1" stop-color="#003c98"/></linearGradient><linearGradient id="rg2" x1="0" y1="0" x2="0" y2="1"><stop offset="0" stop-color="#003c98"/><stop offset="1" stop-color="#20b0f8"/></linearGradient></defs><path d="M2.6 3.3 A5.2 5.2 0 0 0 2.6 10.7" fill="none" stroke="url(#rg2)" stroke-width="1.8"/><circle cx="8" cy="7" r="2.9" fill="#fff" stroke="url(#rg)" stroke-width="2.2"/></svg>
<div class="t" style="left:724.5px;top:91px;">Reset All Counters</div>
<div style="left:1199px;top:88px;width:60px;height:17px;background:#fff;border:1px solid #a0a0a0;box-sizing:border-box"></div>
<div class="t" style="left:1201.5px;top:91px;color:#a0a0a0;font-style:italic">Find</div>
<div style="left:1266px;top:88px;width:49px;height:17px;background:#fff;border:1px solid #a0a0a0;box-sizing:border-box"></div>
<div class="t" style="left:1267.5px;top:91px;">all</div>
<div style="left:1316px;top:88px;width:17px;height:17px;background:#f0f0f0;border:1px solid #a0a0a0;box-sizing:border-box"></div>
<svg style="position:absolute;left:1319px;top:92px;" width="11" height="11" viewBox="0 0 11 11"><path d="M2 1.5 H9" stroke="#000" stroke-width="1"/><path d="M3.5 3 H7.5 V5.5 H9.5 L5.5 9.5 L1.5 5.5 H3.5 Z" fill="#000"/></svg>
<div style="left:428px;top:111px;width:906px;height:18px;background:#f0f0f0;border-top:1px solid #a0a0a0;border-bottom:1px solid #a0a0a0;border-left:1px solid #a0a0a0;box-sizing:border-box"></div>
<div style="left:429px;top:112px;width:23px;height:1px;background:#fff"></div>
<div style="left:452px;top:111px;width:1px;height:18px;background:#a0a0a0"></div>
<div class="t" style="left:427.5px;top:115px;width:24px;text-align:center;">#</div>
<div style="left:453px;top:112px;width:26px;height:1px;background:#fff"></div>
<div style="left:453px;top:112px;width:1px;height:16px;background:#fff"></div>
<div style="left:479px;top:111px;width:1px;height:18px;background:#a0a0a0"></div>
<div style="left:480px;top:112px;width:49px;height:1px;background:#fff"></div>
<div style="left:480px;top:112px;width:1px;height:16px;background:#fff"></div>
<div style="left:529px;top:111px;width:1px;height:18px;background:#a0a0a0"></div>
<div class="t" style="left:481.5px;top:115px;width:46px;overflow:hidden;white-space:nowrap">Action</div>
<div style="left:530px;top:112px;width:64px;height:1px;background:#fff"></div>
<div style="left:530px;top:112px;width:1px;height:16px;background:#fff"></div>
<div style="left:594px;top:111px;width:1px;height:18px;background:#a0a0a0"></div>
<div class="t" style="left:531.5px;top:115px;width:61px;overflow:hidden;white-space:nowrap">Chain</div>
<div style="left:595px;top:112px;width:69px;height:1px;background:#fff"></div>
<div style="left:595px;top:112px;width:1px;height:16px;background:#fff"></div>
<div style="left:664px;top:111px;width:1px;height:18px;background:#a0a0a0"></div>
<div class="t" style="left:596.5px;top:115px;width:66px;overflow:hidden;white-space:nowrap">Src. Address</div>
<div style="left:665px;top:112px;width:69px;height:1px;background:#fff"></div>
<div style="left:665px;top:112px;width:1px;height:16px;background:#fff"></div>
<div style="left:734px;top:111px;width:1px;height:18px;background:#a0a0a0"></div>
<div class="t" style="left:666.5px;top:115px;width:66px;overflow:hidden;white-space:nowrap">Dst. Address</div>
<div style="left:735px;top:112px;width:39px;height:1px;background:#fff"></div>
<div style="left:735px;top:112px;width:1px;height:16px;background:#fff"></div>
<div style="left:774px;top:111px;width:1px;height:18px;background:#a0a0a0"></div>
<div class="t" style="left:736.5px;top:115px;width:36px;overflow:hidden;white-space:nowrap">Proto...</div>
<div style="left:775px;top:112px;width:59px;height:1px;background:#fff"></div>
<div style="left:775px;top:112px;width:1px;height:16px;background:#fff"></div>
<div style="left:834px;top:111px;width:1px;height:18px;background:#a0a0a0"></div>
<div class="t" style="left:776.5px;top:115px;width:56px;overflow:hidden;white-space:nowrap">Src. Port</div>
<div style="left:835px;top:112px;width:59px;height:1px;background:#fff"></div>
<div style="left:835px;top:112px;width:1px;height:16px;background:#fff"></div>
<div style="left:894px;top:111px;width:1px;height:18px;background:#a0a0a0"></div>
<div class="t" style="left:836.5px;top:115px;width:56px;overflow:hidden;white-space:nowrap">Dst. Port</div>
<div style="left:895px;top:112px;width:49px;height:1px;background:#fff"></div>
<div style="left:895px;top:112px;width:1px;height:16px;background:#fff"></div>
<div style="left:944px;top:111px;width:1px;height:18px;background:#a0a0a0"></div>
<div class="t" style="left:896.5px;top:115px;width:46px;overflow:hidden;white-space:nowrap">In. Inter...</div>
<div style="left:945px;top:112px;width:49px;height:1px;background:#fff"></div>
<div style="left:945px;top:112px;width:1px;height:16px;background:#fff"></div>
<div style="left:994px;top:111px;width:1px;height:18px;background:#a0a0a0"></div>
<div class="t" style="left:946.5px;top:115px;width:46px;overflow:hidden;white-space:nowrap">Out. Int...</div>
<div style="left:995px;top:112px;width:49px;height:1px;background:#fff"></div>
<div style="left:995px;top:112px;width:1px;height:16px;background:#fff"></div>
<div style="left:1044px;top:111px;width:1px;height:18px;background:#a0a0a0"></div>
<div class="t" style="left:996.5px;top:115px;width:46px;overflow:hidden;white-space:nowrap">In. Inter...</div>
<div style="left:1045px;top:112px;width:49px;height:1px;background:#fff"></div>
<div style="left:1045px;top:112px;width:1px;height:16px;background:#fff"></div>
<div style="left:1094px;top:111px;width:1px;height:18px;background:#a0a0a0"></div>
<div class="t" style="left:1046.5px;top:115px;width:46px;overflow:hidden;white-space:nowrap">Out. Int...</div>
<div style="left:1095px;top:112px;width:49px;height:1px;background:#fff"></div>
<div style="left:1095px;top:112px;width:1px;height:16px;background:#fff"></div>
<div style="left:1144px;top:111px;width:1px;height:18px;background:#a0a0a0"></div>
<div class="t" style="left:1096.5px;top:115px;width:46px;overflow:hidden;white-space:nowrap">Src. Ad...</div>
<div style="left:1145px;top:112px;width:49px;height:1px;background:#fff"></div>
<div style="left:1145px;top:112px;width:1px;height:16px;background:#fff"></div>
<div style="left:1194px;top:111px;width:1px;height:18px;background:#a0a0a0"></div>
<div class="t" style="left:1146.5px;top:115px;width:46px;overflow:hidden;white-space:nowrap">Dst. Ad...</div>
<div style="left:1195px;top:112px;width:59px;height:1px;background:#fff"></div>
<div style="left:1195px;top:112px;width:1px;height:16px;background:#fff"></div>
<div style="left:1254px;top:111px;width:1px;height:18px;background:#a0a0a0"></div>
<div class="t" style="left:1196.5px;top:115px;width:56px;overflow:hidden;white-space:nowrap">Bytes</div>
<div style="left:1255px;top:112px;width:59px;height:1px;background:#fff"></div>
<div style="left:1255px;top:112px;width:1px;height:16px;background:#fff"></div>
<div style="left:1314px;top:111px;width:1px;height:18px;background:#a0a0a0"></div>
<div class="t" style="left:1256.5px;top:115px;width:56px;overflow:hidden;white-space:nowrap">Packets</div>
<div style="left:1315px;top:112px;width:3px;height:1px;background:#fff"></div>
<div style="left:1315px;top:112px;width:1px;height:16px;background:#fff"></div>
<div style="left:1318px;top:111px;width:1px;height:18px;background:#a0a0a0"></div>
<div style="left:1319px;top:112px;width:14px;height:1px;background:#fff"></div>
<div style="left:1319px;top:112px;width:1px;height:16px;background:#fff"></div>
<div style="left:1333px;top:111px;width:1px;height:18px;background:#a0a0a0"></div>
<svg style="position:absolute;left:1319px;top:117px;" width="14" height="8" viewBox="0 0 14 8"><path d="M2 1 H12 L7 6 Z" fill="#000"/></svg>
<div style="left:428px;top:129px;width:906px;height:340px;background:#fff;border-left:1px solid #a0a0a0;border-bottom:1px solid #a0a0a0;box-sizing:border-box"></div>
<div style="left:1333px;top:129px;width:1px;height:340px;background:#a0a0a0"></div>
<div style="left:428px;top:469px;width:1px;height:20px;background:#a0a0a0"></div>
<div class="t" style="left:430.5px;top:472px;">0 items</div>
<div style="left:549px;top:121px;width:420px;height:522px;background:#f0f0f0;border:1px solid #000;box-sizing:border-box"></div>
<div style="left:550px;top:122px;width:418px;height:22px;background:#4e4ec8"></div>
<div class="t" style="left:554.5px;top:129px;color:#fff">New Firewall Rule</div>
<div style="left:932px;top:126px;width:15px;height:15px;background:#eeeaee;border:1px solid #333;box-sizing:border-box;box-shadow:inset 1px 1px 0 #fff"></div>
<div style="left:935px;top:129px;width:9px;height:9px;border:1px solid #333;border-top-width:2px;box-sizing:border-box"></div>
<div style="left:949px;top:126px;width:15px;height:15px;background:#eeeaee;border:1px solid #333;box-sizing:border-box;box-shadow:inset 1px 1px 0 #fff"></div>
<svg style="position:absolute;left:952px;top:129px;" width="9" height="9" viewBox="0 0 9 9"><path d="M1.5 1.5 L7.5 7.5 M7.5 1.5 L1.5 7.5" stroke="#333" stroke-width="2"/></svg>
<div style="left:550px;top:144px;width:1px;height:497px;background:#fff"></div>
<div style="left:554px;top:146px;width:53px;height:26px;background:#f0f0f0;border-top:1px solid #fff;border-left:1px solid #fff;border-right:1px solid #a0a0a0;box-sizing:border-box"></div>
<div class="t" style="left:553.5px;top:153px;width:52px;text-align:center;">General</div>
<div style="left:607px;top:149px;width:62px;height:22px;background:#d9d9d9;border-top:1px solid #e4e4e4;border-right:1px solid #a8a8a8;box-sizing:border-box"></div>
<div class="t" style="left:606.5px;top:155px;width:61px;text-align:center;">Advanced</div>
<div style="left:669px;top:149px;width:38px;height:22px;background:#d9d9d9;border-top:1px solid #e4e4e4;border-right:1px solid #a8a8a8;box-sizing:border-box"></div>
<div class="t" style="left:668.5px;top:155px;width:37px;text-align:center;">Extra</div>
<div style="left:707px;top:149px;width:44px;height:22px;background:#d9d9d9;border-top:1px solid #e4e4e4;border-right:1px solid #a8a8a8;box-sizing:border-box"></div>
<div class="t" style="left:706.5px;top:155px;width:43px;text-align:center;">Action</div>
<div style="left:751px;top:149px;width:56px;height:22px;background:#d9d9d9;border-top:1px solid #e4e4e4;border-right:1px solid #a8a8a8;box-sizing:border-box"></div>
<div class="t" style="left:750.5px;top:155px;width:55px;text-align:center;">Statistics</div>
<div style="left:607px;top:171px;width:238px;height:1px;background:#fff"></div>
<div style="left:552px;top:172px;width:1px;height:444px;background:#fff"></div>
<div style="left:844px;top:171px;width:1px;height:445px;background:#a0a0a0"></div>
<div style="left:552px;top:616px;width:293px;height:1px;background:#a0a0a0"></div>
<div class="t" style="left:559.5px;top:182px;width:109px;text-align:right;color:#000">Chain:</div>
<div style="left:674px;top:179px;width:125px;height:17px;background:#fff;border:1px solid #a0a0a0;box-sizing:border-box"></div>
<div class="t" style="left:675.5px;top:182px;">forward</div>
<div style="left:800px;top:179px;width:17px;height:17px;background:#f0f0f0;border:1px solid #a0a0a0;box-sizing:border-box"></div>
<svg style="position:absolute;left:803px;top:183px;" width="11" height="11" viewBox="0 0 11 11"><path d="M2 1.5 H9" stroke="#000" stroke-width="1"/><path d="M3.5 3 H7.5 V5.5 H9.5 L5.5 9.5 L1.5 5.5 H3.5 Z" fill="#000"/></svg>
<div class="t" style="left:559.5px;top:205px;width:109px;text-align:right;color:#000">Src. Address:</div>
<div style="left:674px;top:202px;width:125px;height:17px;background:#f0f0f0;border:1px solid #a0a0a0;box-sizing:border-box;box-shadow:1px 1px 0 #fff"></div>
<svg style="position:absolute;left:804px;top:208px;" width="11" height="7" viewBox="0 0 11 7"><path d="M0.5 0.5 H10.5 L5.5 5.5 Z" fill="#000"/></svg>
<div class="t" style="left:559.5px;top:228px;width:109px;text-align:right;color:#000">Dst. Address:</div>
<div style="left:674px;top:225px;width:125px;height:17px;background:#f0f0f0;border:1px solid #a0a0a0;box-sizing:border-box;box-shadow:1px 1px 0 #fff"></div>
<svg style="position:absolute;left:804px;top:231px;" width="11" height="7" viewBox="0 0 11 7"><path d="M0.5 0.5 H10.5 L5.5 5.5 Z" fill="#000"/></svg>
<div style="left:560px;top:249px;width:257px;height:1px;background:#a8a8a8"></div>
<div style="left:560px;top:250px;width:257px;height:1px;background:#fff"></div>
<div class="t" style="left:559.5px;top:259px;width:109px;text-align:right;color:#000">Protocol:</div>
<div style="left:674px;top:256px;width:125px;height:17px;background:#f0f0f0;border:1px solid #a0a0a0;box-sizing:border-box;box-shadow:1px 1px 0 #fff"></div>
<svg style="position:absolute;left:804px;top:262px;" width="11" height="7" viewBox="0 0 11 7"><path d="M0.5 0.5 H10.5 L5.5 5.5 Z" fill="#000"/></svg>
<div class="t" style="left:559.5px;top:282px;width:109px;text-align:right;color:#6d6d6d">Src. Port:</div>
<div style="left:674px;top:279px;width:125px;height:17px;background:#f0f0f0;border:1px solid #a0a0a0;box-sizing:border-box;box-shadow:1px 1px 0 #fff"></div>
<svg style="position:absolute;left:804px;top:285px;" width="11" height="7" viewBox="0 0 11 7"><path d="M0.5 0.5 H10.5 L5.5 5.5 Z" fill="#9aa0a0"/></svg>
<div class="t" style="left:559.5px;top:305px;width:109px;text-align:right;color:#6d6d6d">Dst. Port:</div>
<div style="left:674px;top:302px;width:125px;height:17px;background:#f0f0f0;border:1px solid #a0a0a0;box-sizing:border-box;box-shadow:1px 1px 0 #fff"></div>
<svg style="position:absolute;left:804px;top:308px;" width="11" height="7" viewBox="0 0 11 7"><path d="M0.5 0.5 H10.5 L5.5 5.5 Z" fill="#9aa0a0"/></svg>
<div class="t" style="left:559.5px;top:328px;width:109px;text-align:right;color:#6d6d6d">Any. Port:</div>
<div style="left:674px;top:325px;width:125px;height:17px;background:#f0f0f0;border:1px solid #a0a0a0;box-sizing:border-box;box-shadow:1px 1px 0 #fff"></div>
<svg style="position:absolute;left:804px;top:331px;" width="11" height="7" viewBox="0 0 11 7"><path d="M0.5 0.5 H10.5 L5.5 5.5 Z" fill="#9aa0a0"/></svg>
<div class="t" style="left:559.5px;top:351px;width:109px;text-align:right;color:#000">In. Interface:</div>
<div style="left:674px;top:348px;width:125px;height:17px;background:#f0f0f0;border:1px solid #a0a0a0;box-sizing:border-box;box-shadow:1px 1px 0 #fff"></div>
<svg style="position:absolute;left:804px;top:354px;" width="11" height="7" viewBox="0 0 11 7"><path d="M0.5 0.5 H10.5 L5.5 5.5 Z" fill="#000"/></svg>
<div class="t" style="left:559.5px;top:374px;width:109px;text-align:right;color:#000">Out. Interface:</div>
<div style="left:674px;top:371px;width:125px;height:17px;background:#f0f0f0;border:1px solid #a0a0a0;box-sizing:border-box;box-shadow:1px 1px 0 #fff"></div>
<svg style="position:absolute;left:804px;top:377px;" width="11" height="7" viewBox="0 0 11 7"><path d="M0.5 0.5 H10.5 L5.5 5.5 Z" fill="#000"/></svg>
<div style="left:560px;top:395px;width:257px;height:1px;background:#a8a8a8"></div>
<div style="left:560px;top:396px;width:257px;height:1px;background:#fff"></div>
<div class="t" style="left:559.5px;top:405px;width:109px;text-align:right;color:#000">In. Interface List:</div>
<div style="left:674px;top:402px;width:125px;height:17px;background:#f0f0f0;border:1px solid #a0a0a0;box-sizing:border-box;box-shadow:1px 1px 0 #fff"></div>
<svg style="position:absolute;left:804px;top:408px;" width="11" height="7" viewBox="0 0 11 7"><path d="M0.5 0.5 H10.5 L5.5 5.5 Z" fill="#000"/></svg>
<div class="t" style="left:559.5px;top:428px;width:109px;text-align:right;color:#000">Out. Interface List:</div>
<div style="left:674px;top:425px;width:125px;height:17px;background:#f0f0f0;border:1px solid #a0a0a0;box-sizing:border-box;box-shadow:1px 1px 0 #fff"></div>
<svg style="position:absolute;left:804px;top:431px;" width="11" height="7" viewBox="0 0 11 7"><path d="M0.5 0.5 H10.5 L5.5 5.5 Z" fill="#000"/></svg>
<div style="left:560px;top:449px;width:257px;height:1px;background:#a8a8a8"></div>
<div style="left:560px;top:450px;width:257px;height:1px;background:#fff"></div>
<div class="t" style="left:559.5px;top:459px;width:109px;text-align:right;color:#000">Packet Mark:</div>
<div style="left:674px;top:456px;width:125px;height:17px;background:#f0f0f0;border:1px solid #a0a0a0;box-sizing:border-box;box-shadow:1px 1px 0 #fff"></div>
<svg style="position:absolute;left:804px;top:462px;" width="11" height="7" viewBox="0 0 11 7"><path d="M0.5 0.5 H10.5 L5.5 5.5 Z" fill="#000"/></svg>
<div class="t" style="left:559.5px;top:482px;width:109px;text-align:right;color:#000">Connection Mark:</div>
<div style="left:674px;top:479px;width:125px;height:17px;background:#f0f0f0;border:1px solid #a0a0a0;box-sizing:border-box;box-shadow:1px 1px 0 #fff"></div>
<svg style="position:absolute;left:804px;top:485px;" width="11" height="7" viewBox="0 0 11 7"><path d="M0.5 0.5 H10.5 L5.5 5.5 Z" fill="#000"/></svg>
<div class="t" style="left:559.5px;top:505px;width:109px;text-align:right;color:#000">Routing Mark:</div>
<div style="left:674px;top:502px;width:125px;height:17px;background:#f0f0f0;border:1px solid #a0a0a0;box-sizing:border-box;box-shadow:1px 1px 0 #fff"></div>
<svg style="position:absolute;left:804px;top:508px;" width="11" height="7" viewBox="0 0 11 7"><path d="M0.5 0.5 H10.5 L5.5 5.5 Z" fill="#000"/></svg>
<div class="t" style="left:559.5px;top:528px;width:109px;text-align:right;color:#000">Routing Table:</div>
<div style="left:674px;top:525px;width:125px;height:17px;background:#f0f0f0;border:1px solid #a0a0a0;box-sizing:border-box;box-shadow:1px 1px 0 #fff"></div>
<svg style="position:absolute;left:804px;top:531px;" width="11" height="7" viewBox="0 0 11 7"><path d="M0.5 0.5 H10.5 L5.5 5.5 Z" fill="#000"/></svg>
<div style="left:560px;top:549px;width:257px;height:1px;background:#a8a8a8"></div>
<div style="left:560px;top:550px;width:257px;height:1px;background:#fff"></div>
<div class="t" style="left:559.5px;top:559px;width:109px;text-align:right;color:#000">Connection Type:</div>
<div style="left:674px;top:556px;width:125px;height:17px;background:#f0f0f0;border:1px solid #a0a0a0;box-sizing:border-box;box-shadow:1px 1px 0 #fff"></div>
<svg style="position:absolute;left:804px;top:562px;" width="11" height="7" viewBox="0 0 11 7"><path d="M0.5 0.5 H10.5 L5.5 5.5 Z" fill="#000"/></svg>
<div class="t" style="left:559.5px;top:582px;width:109px;text-align:right;color:#000">Connection State:</div>
<div style="left:674px;top:579px;width:125px;height:17px;background:#f0f0f0;border:1px solid #a0a0a0;box-sizing:border-box;box-shadow:1px 1px 0 #fff"></div>
<svg style="position:absolute;left:804px;top:585px;" width="11" height="7" viewBox="0 0 11 7"><path d="M0.5 0.5 H10.5 L5.5 5.5 Z" fill="#000"/></svg>
<div style="left:822px;top:178px;width:16px;height:432px;background:#f0f0f0;border:1px solid #a0a0a0;box-sizing:border-box"></div>
<div style="left:822px;top:178px;width:16px;height:16px;background:#f0f0f0;border:1px solid #a0a0a0;box-sizing:border-box;box-shadow:inset 1px 1px 0 #fff"></div>
<svg style="position:absolute;left:824px;top:182px;" width="12" height="10" viewBox="0 0 12 10"><path d="M6 1 L10 5 H8 V7.5 H4 V5 H2 Z" fill="#000"/></svg>
<div style="left:823px;top:572px;width:14px;height:22px;background:#d9d9d9;border-top:1px solid #a0a0a0;box-sizing:border-box;box-shadow:inset 1px 1px 0 #f4f4f4"></div>
<div style="left:822px;top:594px;width:16px;height:16px;background:#f0f0f0;border:1px solid #a0a0a0;box-sizing:border-box;box-shadow:inset 1px 1px 0 #fff"></div>
<svg style="position:absolute;left:824px;top:596px;" width="12" height="10" viewBox="0 0 12 10"><path d="M6 9 L10 5 H8 V2.5 H4 V5 H2 Z" fill="#000"/></svg>
<div style="left:855px;top:150px;width:104px;height:23px;background:#f0f0f0;border:1px solid #000;box-sizing:border-box;box-shadow:inset 1px 1px 0 #fff"></div>
<div class="t" style="left:854.5px;top:156px;width:104px;text-align:center;">OK</div>
<div style="left:855px;top:176px;width:104px;height:23px;background:#f0f0f0;border:1px solid #a0a0a0;box-sizing:border-box;box-shadow:inset 1px 1px 0 #fff"></div>
<div class="t" style="left:854.5px;top:182px;width:104px;text-align:center;">Cancel</div>
<div style="left:855px;top:202px;width:104px;height:23px;background:#f0f0f0;border:1px solid #a0a0a0;box-sizing:border-box;box-shadow:inset 1px 1px 0 #fff"></div>
<div class="t" style="left:854.5px;top:208px;width:104px;text-align:center;">Apply</div>
<div style="left:855px;top:233px;width:104px;height:23px;background:#f0f0f0;border:1px solid #a0a0a0;box-sizing:border-box;box-shadow:inset 1px 1px 0 #fff"></div>
<div class="t" style="left:854.5px;top:239px;width:104px;text-align:center;">Disable</div>
<div style="left:855px;top:259px;width:104px;height:23px;background:#f0f0f0;border:1px solid #a0a0a0;box-sizing:border-box;box-shadow:inset 1px 1px 0 #fff"></div>
<div class="t" style="left:854.5px;top:265px;width:104px;text-align:center;">Comment</div>
<div style="left:855px;top:285px;width:104px;height:23px;background:#f0f0f0;border:1px solid #a0a0a0;box-sizing:border-box;box-shadow:inset 1px 1px 0 #fff"></div>
<div class="t" style="left:854.5px;top:291px;width:104px;text-align:center;">Copy</div>
<div style="left:855px;top:311px;width:104px;height:23px;background:#f0f0f0;border:1px solid #a0a0a0;box-sizing:border-box;box-shadow:inset 1px 1px 0 #fff"></div>
<div class="t" style="left:854.5px;top:317px;width:104px;text-align:center;">Remove</div>
<div style="left:855px;top:337px;width:104px;height:23px;background:#f0f0f0;border:1px solid #a0a0a0;box-sizing:border-box;box-shadow:inset 1px 1px 0 #fff"></div>
<div class="t" style="left:854.5px;top:343px;width:104px;text-align:center;">Reset Counters</div>
<div style="left:855px;top:363px;width:104px;height:23px;background:#f0f0f0;border:1px solid #a0a0a0;box-sizing:border-box;box-shadow:inset 1px 1px 0 #fff"></div>
<div class="t" style="left:854.5px;top:369px;width:104px;text-align:center;">Reset All Counters</div>
<div style="left:552px;top:619px;width:203px;height:19px;background:#f0f0f0;border-top:1px solid #a0a0a0;border-left:1px solid #a0a0a0;border-right:1px solid #fff;border-bottom:1px solid #fff;box-sizing:border-box"></div>
<div style="left:757px;top:619px;width:207px;height:19px;background:#f0f0f0;border-top:1px solid #a0a0a0;border-left:1px solid #a0a0a0;border-right:1px solid #fff;border-bottom:1px solid #fff;box-sizing:border-box"></div>
<div class="t" style="left:554.5px;top:623px;">enabled</div>
<div style="left:95.0px;top:181.8px;width:21px;height:21px;border-radius:50%;background:#fff;box-shadow:1px 1px 4px rgba(0,0,0,0.7)"></div>
<div style="left:97.2px;top:184.0px;width:16.6px;height:16.6px;border-radius:50%;background:#f00;color:#fff;font:bold 13px/19px 'Liberation Mono',monospace;text-align:center;text-indent:0.5px">1</div>
<div style="left:206.0px;top:273.8px;width:21px;height:21px;border-radius:50%;background:#fff;box-shadow:1px 1px 4px rgba(0,0,0,0.7)"></div>
<div style="left:208.2px;top:276.0px;width:16.6px;height:16.6px;border-radius:50%;background:#f00;color:#fff;font:normal 14px/19px 'Liberation Mono',monospace;text-align:center;text-indent:0.5px">2</div>
<div style="left:405.8px;top:80.9px;width:21px;height:21px;border-radius:50%;background:#fff;box-shadow:1px 1px 4px rgba(0,0,0,0.7)"></div>
<div style="left:408.0px;top:83.10000000000001px;width:16.6px;height:16.6px;border-radius:50%;background:#f00;color:#fff;font:normal 14px/19px 'Liberation Mono',monospace;text-align:center;text-indent:0.5px">3</div>
</body></html>
